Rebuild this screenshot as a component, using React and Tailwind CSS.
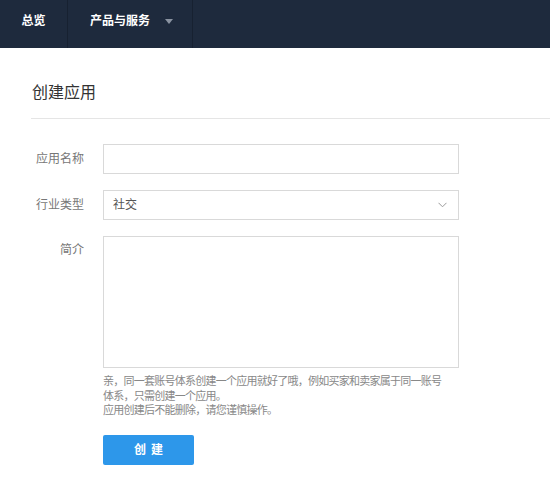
// App.jsx — 创建应用表单页

const FONT = "font-['Helvetica_Neue','Liberation_Sans','Noto_Sans_CJK_SC',sans-serif]"

function NavBar() {
  return (
    <div className="flex h-12 bg-[#1e2a3d] text-white text-[12px] font-bold">
      <div className="flex items-center w-[68px] justify-center pb-[6px] border-r border-[#172131]">
        总览
      </div>
      <div className="flex items-center w-[125px] pl-[22px] pb-[6px] border-r border-[#172131]">
        <span>产品与服务</span>
        <span className="ml-[15px] w-0 h-0 border-x-[4px] border-x-transparent border-t-[5px] border-t-[#8a93a1]" />
      </div>
    </div>
  )
}

function Label({ children, className = '' }) {
  return (
    <div className={`w-[53px] text-right text-[12px] text-[#777] ${className}`}>
      {children}
    </div>
  )
}

export default function App() {
  return (
    <div className={`w-[550px] h-[491px] bg-white ${FONT}`}>
      <NavBar />

      <div className="pl-[31px]">
        {/* 标题 */}
        <h1 className="pt-[33px] pb-[13px] pl-px text-[16px] leading-6 text-[#333] border-b border-[#e5e5e5]">
          创建应用
        </h1>

        <div className="flex flex-col pt-[25px]">
          {/* 应用名称 */}
          <div className="flex items-center gap-[19px]">
            <Label>应用名称</Label>
            <input className="w-[356px] h-[30px] border border-[#d9d9d9] outline-none px-2" />
          </div>

          {/* 行业类型 */}
          <div className="flex items-center gap-[19px] mt-[16px]">
            <Label>行业类型</Label>
            <div className="w-[356px] h-[30px] border border-[#d9d9d9] flex items-center justify-between pl-[9px] pr-[11px] text-[12px] text-[#555]">
              <span>社交</span>
              <svg width="9" height="6" viewBox="0 0 9 6" fill="none">
                <path d="M0.5 0.8 L4.5 4.8 L8.5 0.8" stroke="#9a9a9a" strokeWidth="1" />
              </svg>
            </div>
          </div>

          {/* 简介 */}
          <div className="flex items-start gap-[19px] mt-[16px]">
            <Label className="pt-[5px]">简介</Label>
            <div className="flex flex-col">
              <textarea className="w-[356px] h-[132px] border border-[#d9d9d9] outline-none resize-none" />
              <p className="mt-[6px] text-[11px] leading-[14.5px] tracking-[-0.75px] text-[#888] whitespace-nowrap">
                亲，同一套账号体系创建一个应用就好了哦，例如买家和卖家属于同一账号<br />
                体系，只需创建一个应用。<br />
                应用创建后不能删除，请您谨慎操作。
              </p>
              <button className="mt-[17px] w-[91px] h-[30px] rounded-[2px] bg-[#2d97ea] text-white text-[12px] font-bold flex items-center justify-center gap-[5px]">
                <span>创</span><span>建</span>
              </button>
            </div>
          </div>
        </div>
      </div>
    </div>
  )
}
